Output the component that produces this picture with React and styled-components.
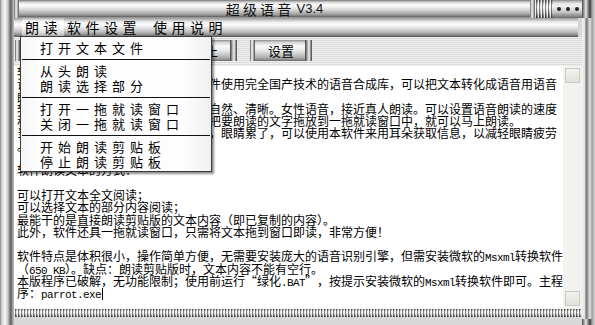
import React from 'react';
import styled, { createGlobalStyle } from 'styled-components';

const Global = createGlobalStyle`
  html, body { margin: 0; padding: 0; background: #d6d6d6; }
  body { width: 595px; height: 325px; overflow: hidden; font-family: "Noto Sans CJK SC", sans-serif; }
`;

const Window = styled.div`
  position: relative;
  width: 595px;
  height: 325px;
  display: flex;
  background: #d6d6d6;
  overflow: hidden;
`;

const LeftFrame = styled.div`
  width: 14px;
  flex: none;
  background: linear-gradient(to right, #8c8c8c 0, #d4d4d4 2px, #f8f8f8 5px, #c4c4c4 8px, #9a9a9a 9px, #5c5c5c 11px, #8a8a8a 12px, #c4c4c4 14px);
`;

const RightFrame = styled.div`
  width: 13px;
  flex: none;
  display: flex;
  flex-direction: column;
  justify-content: space-between;
  background: linear-gradient(to right, #f4f4f4 0, #dedede 3px, #6a6a6a 4px, #a8a8a8 6px, #e4e4e4 8px, #9c9c9c 10px, #d2d2d2 13px);
`;

const RightCap = styled.div`
  height: ${p => p.$h}px;
  background: linear-gradient(to right, #4a4a4a 0, #9a9a9a 2px, #e8e8e8 4px, #8a8a8a 6px, #3c3c3c 8px, #a0a0a0 10px, #d0d0d0 13px);
`;

const Column = styled.div`
  flex: 1;
  min-width: 0;
  display: flex;
  flex-direction: column;
`;

const TitleBar = styled.div`
  height: 18px;
  flex: none;
  display: flex;
`;

const tube = `linear-gradient(to bottom, #707070 0, #a8a8a8 1px, #e6e6e6 3px, #fdfdfd 5px, #f0f0f0 7px, #d4d4d4 10px, #b2b2b2 13px, #939393 15px, #5e5e5e 17px, #cfcfcf 18px)`;

const Ring = styled.div`
  width: ${p => p.$w}px;
  flex: none;
  background: linear-gradient(to right, #6a6a6a 0, #f4f4f4 40%, #b0b0b0 70%, #555 100%);
`;

const TitleTube = styled.div`
  flex: 1;
  background: ${tube};
  display: flex;
  align-items: center;
  justify-content: center;
  color: #111;
  padding-bottom: 1px;
`;

const TitleCJK = styled.span`
  font-family: "Noto Sans CJK SC", sans-serif;
  font-size: 14px;
  letter-spacing: 3.2px;
`;

const TitleVer = styled.span`
  font-family: "Liberation Sans", sans-serif;
  font-size: 13px;
  margin-left: 2px;
`;

const Knurl = styled.div`
  width: ${p => (p.$w ? `${p.$w}px` : 'auto')};
  flex: ${p => (p.$w ? 'none' : '1')};
  height: ${p => p.$h || 18}px;
  background:
    repeating-linear-gradient(to right, rgba(255,255,255,0.75) 0 1px, rgba(0,0,0,0.45) 1px 2px, rgba(0,0,0,0) 2px 3px),
    linear-gradient(to bottom, #7a7a7a 0, #e0e0e0 25%, #f4f4f4 40%, #bcbcbc 70%, #5a5a5a 100%);
`;

const DotsBox = styled.div`
  width: 29px;
  flex: none;
  display: flex;
  align-items: center;
  justify-content: center;
  gap: 5px;
  background: linear-gradient(to bottom, #8a8a8a 0, #e4e4e4 3px, #f2f2f2 6px, #c8c8c8 12px, #8e8e8e 16px, #6a6a6a 18px);
`;

const Dot = styled.span`
  width: 4px;
  height: 4px;
  border-radius: 50%;
  background: #222;
`;

const MenuBar = styled.div`
  height: 19px;
  flex: none;
  margin-right: 4px;
  display: flex;
  align-items: stretch;
  padding-left: 8px;
  background: linear-gradient(to bottom, #9a9a9a 0, #c4c4c4 2px, #eeeeee 4px, #fafafa 7px, #e2e2e2 10px, #bcbcbc 14px, #8a8a8a 17px, #4e4e4e 19px);
`;

const MenuTitle = styled.div`
  display: flex;
  align-items: center;
  padding: 0 2px 1px 3px;
  margin-left: ${p => p.$ml || 0}px;
  font-size: 14px;
  letter-spacing: 4.5px;
  color: #000;
  background: ${p => (p.$active ? 'linear-gradient(to bottom, #b0b0b0 0, #f6f6f6 3px, #ffffff 7px, #ececec 12px, #cfcfcf 16px, #9a9a9a 19px)' : 'transparent')};
`;

const Toolbar = styled.div`
  height: 29px;
  flex: none;
  display: flex;
  align-items: flex-start;
  gap: 13px;
  padding: 3px 0 0 1px;
  box-sizing: border-box;
  background: repeating-linear-gradient(to bottom, #efefef 0 1px, #dadada 1px 2px);
`;

const Button = styled.div`
  width: ${p => p.$w}px;
  height: 21px;
  display: flex;
  align-items: center;
  justify-content: center;
  box-sizing: border-box;
  font-size: 13px;
  color: #000;
  background:
    linear-gradient(to right, #4a4a4a 0, #bdbdbd 1px, #f8f8f8 2px, #8a8a8a 4px, #3e3e3e 5px, rgba(0,0,0,0) 5px, rgba(0,0,0,0) calc(100% - 7px), #3e3e3e calc(100% - 7px), #9a9a9a calc(100% - 5px), #f4f4f4 calc(100% - 3px), #7a7a7a calc(100% - 1px), #3a3a3a 100%),
    linear-gradient(to bottom, #8a8a8a 0, #cfcfcf 2px, #fbfbfb 6px, #ececec 10px, #c6c6c6 15px, #9c9c9c 19px, #6a6a6a 21px);
`;

const Content = styled.div`
  height: 243px;
  flex: none;
  display: flex;
`;

const TextArea = styled.div`
  flex: 1;
  background: #ffffff;
  padding: 0 0 0 3px;
  overflow: hidden;
  font-family: "Noto Sans CJK SC", sans-serif;
  font-size: 12px;
  color: #000;
`;

const Line = styled.div`
  height: 12.3px;
  line-height: 12.3px;
  white-space: pre;
`;

const Latin = styled.span`
  font-family: "Liberation Mono", monospace;
  font-size: 11px;
  letter-spacing: -0.6px;
`;

const Quote = styled.span`
  display: inline-block;
  width: 12px;
  text-align: ${p => (p.$open ? 'right' : 'left')};
`;

const Caret = styled.span`
  display: inline-block;
  width: 1px;
  height: 12px;
  background: #000;
  vertical-align: -2px;
  margin-left: 1px;
`;

const ScrollTrack = styled.div`
  width: 19px;
  flex: none;
  box-sizing: border-box;
  padding: 2px 2px 3px 2px;
  display: flex;
  flex-direction: column;
  justify-content: space-between;
  background: #f2f2ef;
`;

const ScrollBox = styled.div`
  width: 15px;
  height: 15px;
  box-sizing: border-box;
  border: 1px solid #c9c9c4;
  background: linear-gradient(to bottom, #f2f2ee, #e2e2dc);
`;

const BottomStrip = styled.div`
  flex: 1;
  background: #d8d8d8;
`;

const Dropdown = styled.div`
  position: absolute;
  left: 20px;
  top: 36px;
  width: 192px;
  box-sizing: border-box;
  padding: 3px 1px 2px 1px;
  background: linear-gradient(to right, #f6f6f6 0, #fdfdfd 10%, #fdfdfd 85%, #f0f0f0 100%);
  border: 1px solid #3a3a3a;
  box-shadow: 2px 2px 2px rgba(0, 0, 0, 0.45);
  display: flex;
  flex-direction: column;
`;

const DropItem = styled.div`
  height: 15px;
  line-height: 15px;
  padding-left: 18px;
  font-size: 13px;
  letter-spacing: 5px;
  color: #000;
  white-space: nowrap;
`;

const Sep = styled.div`
  height: 8px;
  display: flex;
  align-items: center;
  &::after {
    content: "";
    flex: 1;
    height: 1px;
    background: #111;
  }
`;

const lines = [
  '软件简介：',
  '语音朗读软件是一款朗读工具，本软件使用完全国产技术的语音合成库，可以把文本转化成语音用语音',
  '朗读出来。',
  '软件特色：语音合成的朗读效果非常自然、清晰。女性语音，接近真人朗读。可以设置语音朗读的速度',
  '和音量等。有了一拖就读窗口，只需把要朗读的文字拖放到一拖就读窗口中，就可以马上朗读。',
  '当你长时间坐在电脑屏幕前阅读文章，眼睛累了，可以使用本软件来用耳朵获取信息，以减轻眼睛疲劳',
  '。',
  '',
  '软件朗读文本的方式：',
  '',
  '可以打开文本全文阅读；',
  '可以选择文本的部分内容阅读；',
  '最能干的是直接朗读剪贴版的文本内容（即已复制的内容）。',
  '此外，软件还具一拖就读窗口，只需将文本拖到窗口即读，非常方便！',
  '',
  '软件特点是体积很小，操作简单方便，无需要安装庞大的语音识别引擎，但需安装微软的Msxml转换软件',
  '（650 KB）。缺点：朗读剪贴版时，文本内容不能有空行。',
  '本版程序已破解，无功能限制；使用前运行“绿化.BAT”，按提示安装微软的Msxml转换软件即可。主程',
  '序：parrot.exe',
];

function renderLine(str) {
  const parts = str.split(/([\x20-\x7e]+|[“”])/).filter(s => s !== '');
  return parts.map((p, i) => {
    if (p === '“') return <Quote key={i} $open>“</Quote>;
    if (p === '”') return <Quote key={i}>”</Quote>;
    if (/^[\x20-\x7e]+$/.test(p)) return <Latin key={i}>{p}</Latin>;
    return <React.Fragment key={i}>{p}</React.Fragment>;
  });
}

export default function App() {
  return (
    <>
      <Global />
      <Window>
        <LeftFrame />
        <Column>
          <TitleBar>
            <Ring $w={5} />
            <TitleTube>
              <TitleCJK>超级语音</TitleCJK>
              <TitleVer>V3.4</TitleVer>
            </TitleTube>
            <Ring $w={5} />
            <Knurl $w={18} />
            <DotsBox>
              <Dot />
              <Dot />
              <Dot />
            </DotsBox>
          </TitleBar>
          <MenuBar>
            <MenuTitle $active>朗读</MenuTitle>
            <MenuTitle>软件设置</MenuTitle>
            <MenuTitle $ml={7}>使用说明</MenuTitle>
          </MenuBar>
          <Toolbar>
            <Button $w={66}>打开</Button>
            <Button $w={66}>朗读</Button>
            <Button $w={64}>停止</Button>
            <Button $w={62}>设置</Button>
          </Toolbar>
          <Content>
            <TextArea>
              {lines.map((l, i) => (
                <Line key={i}>
                  {renderLine(l)}
                  {i === lines.length - 1 && <Caret />}
                </Line>
              ))}
            </TextArea>
            <ScrollTrack>
              <ScrollBox />
              <ScrollBox />
            </ScrollTrack>
          </Content>
          <Knurl $h={11} />
          <BottomStrip />
        </Column>
        <RightFrame>
          <RightCap $h={18} />
          <RightCap $h={6} />
        </RightFrame>
        <Dropdown>
          <DropItem>打开文本文件</DropItem>
          <Sep />
          <DropItem>从头朗读</DropItem>
          <DropItem>朗读选择部分</DropItem>
          <Sep />
          <DropItem>打开一拖就读窗口</DropItem>
          <DropItem>关闭一拖就读窗口</DropItem>
          <Sep />
          <DropItem>开始朗读剪贴板</DropItem>
          <DropItem>停止朗读剪贴板</DropItem>
        </Dropdown>
      </Window>
    </>
  );
}
